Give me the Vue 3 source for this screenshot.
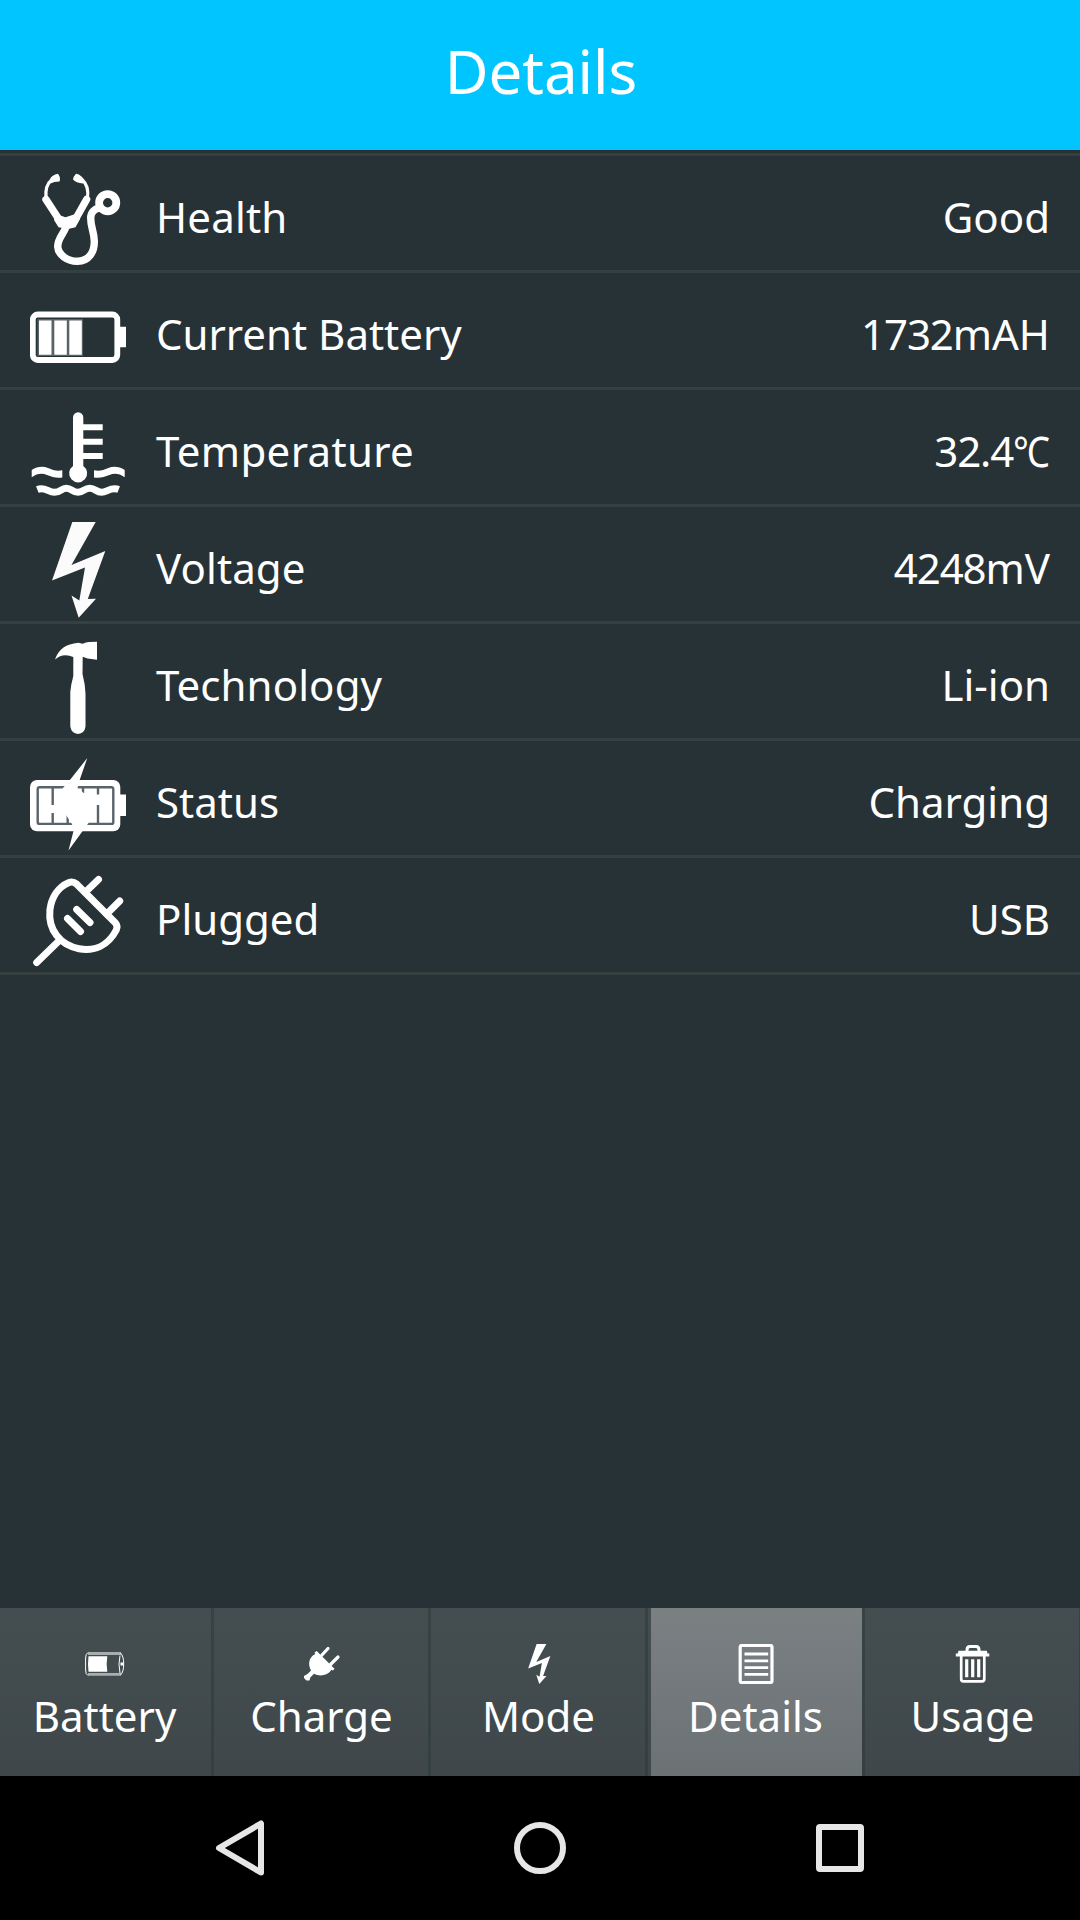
<script setup>
import { ref } from 'vue'

const details = ref([
  { icon: 'health', label: 'Health', value: 'Good', tracking: 0.2 },
  { icon: 'battery', label: 'Current Battery', number: '1732', unit: 'mAH' },
  { icon: 'temperature', label: 'Temperature', number: '32.4', degree: '℃', tracking: 0.35 },
  { icon: 'voltage', label: 'Voltage', number: '4248', unit: 'mV', tracking: 0.1 },
  { icon: 'technology', label: 'Technology', value: 'Li-ion', tracking: 0.1 },
  { icon: 'status', label: 'Status', value: 'Charging' },
  { icon: 'plugged', label: 'Plugged', value: 'USB' },
])

const tabs = ['Battery', 'Charge', 'Mode', 'Details', 'Usage']
const activeTab = ref('Details')
</script>

<template>
  <div class="screen">
    <header class="header">
      <h1>{{ activeTab }}</h1>
    </header>

    <!-- Battery details -->
    <main class="list">
      <div v-for="item in details" :key="item.label" class="row">
        <svg class="row-icon" viewBox="0 0 96 96">
          <g v-if="item.icon === 'health'" class="line">
            <path class="fill" d="M28 2.8 Q31 7 29.5 10.5 Q24 10.5 20.5 12.5 Q18.5 8 22.5 5 Q25 3 28 2.8Z" />
            <path class="fill" d="M46 2.8 Q43 6 43 8.5 Q46 12 53 12.5 Q55 8.5 51.5 5.5 Q49 3 46 2.8Z" />
            <path d="M21.5 9 C16.5 13 15.3 19 16 27 M52 8.5 C57 13 58.5 20 57.5 27" stroke-width="3.2" />
            <path d="M16 28.5 L30 50 M56.6 28.5 L44.5 50" stroke-width="7.4" />
            <path class="fill" d="M26 43 L35.5 46.3 L47 42.5 L50 48 L45.5 56.3 L38 58 L28.5 56.3 L24 49Z" />
            <path d="M36 56 C33 64 27.7 67.5 27.7 75.5 C28 84 38 90.5 47.5 90.3 C59 90 64.5 81 64.3 70 C64 60 60.7 57 60.7 47 C60.7 41.5 64 38 69 37" stroke-width="7.4" />
            <circle cx="77.7" cy="31.7" r="8.6" stroke-width="7.8" />
          </g>
          <g v-else-if="item.icon === 'battery'">
            <rect class="line" x="2.8" y="26.5" width="84.5" height="45.5" rx="5" stroke-width="5.8" />
            <rect class="dim" x="7.5" y="31" width="45.5" height="37" />
            <path d="M89 38.7h7v20.6h-7z M9 32.5h12.5v34.2h-12.5z M24.3 32.5h12.5v34.2h-12.5z M39.3 32.5h12.5v34.2h-12.5z" />
          </g>
          <g v-else-if="item.icon === 'temperature'">
            <path d="M43 12.5a5.15 5.15 0 0 1 10.3 0V19.3h19.4v6H53.3v8.4h19.4v6H53.3v8.3h19.4v6H53.3V61a9 9 0 1 1-10.3 0z" />
            <path d="M1.7 65C7 61.5 13 60.8 18 63S27 66.5 32.3 65.3V72.4C27 73.5 22 72 17 70S7 68.5 1.7 72.3Z" />
            <path d="M94.7 65C89.4 61.5 83.400 60.800 78.400 63S69.400 66.500 64 65.300V72.400C69.400 73.500 74.400 72 79.400 70S89.400 68.500 94.700 72.300Z" />
            <path class="line cut" d="M7.3 84.5 C15 81.5 18 87.3 24.5 87.3 S31 83.2 36.3 83.2 S42 87.3 48 87.3 S54 83.2 59.7 83.2 S66 87.3 71.5 87.3 S81 81.5 88.7 84.5" stroke-width="7" />
          </g>
          <path v-else-if="item.icon === 'voltage'" class="bolt" d="M42.3 0H65.7L41.5 43L75.3 29L57.8 77L66 76.8L48.7 95.7L41.5 73.5L49.3 78.5L55 45.5L22 58.5Z" />
          <path v-else-if="item.icon === 'technology'" d="M25 20.5 Q27.5 13 33.5 8.5 Q39 4.8 48.3 3.7 L52.7 4.8 Q56 2.9 59 2.9 L67 2.7 V20.8 L57.5 19.5 L52.7 17.7 L52.5 35 L54.7 45.5 L55.5 55 V87.5 Q54.5 94.5 48 95 Q41.5 94.5 40.3 87.5 V53 L41.3 45.5 L43.3 37 V17.9 Q36 15 29.5 17.5 Q27 18.8 25 20.5Z" />
          <g v-else-if="item.icon === 'status'">
            <rect y="24" width="90.3" height="51.3" rx="7" />
            <path d="M89 38.5h7v21.5h-7z" />
            <rect class="frame" x="7.7" y="31.3" width="75.6" height="36.6" rx="2" />
            <path class="frame" d="M22.7 32V49 M22.7 57V67.5 M37.7 57V67.5 M53 32V37.5 M68 32V38.5 M68 49V67.5" />
            <path d="M57.3 2 L39.5 24.5 L33 32 L26 45 L34 56 L42 68 L43.5 75 L38.5 94.5 L53 74.5 L58.5 67 L64 46 L55 38 L47.5 32 L50 23Z" />
          </g>
          <g v-else class="line" stroke-width="7">
            <path d="M6.7 89.5 L29.3 67.5 M56 18.5 L68.5 6.5 M76.7 41 L89.7 28 M46.7 36.5 L60 49.5 M37.5 45.5 L50.5 58.5" />
            <path d="M46.5 11 L85.5 50 Q88 53 86.3 57 C78 73 64 78.500 49 75.8 C30 72 18 57 19.9 37 C21.5 24 28.500 14 38.5 9.7 Q43 8 46.5 11Z" />
          </g>
        </svg>
        <span class="label" :style="{ letterSpacing: (item.tracking || 0) + 'px' }">{{ item.label }}</span>
        <span v-if="item.number" class="value"><span class="number">{{ item.number }}</span><span v-if="item.degree" class="degree">{{ item.degree }}</span>{{ item.unit }}</span>
        <span v-else class="value">{{ item.value }}</span>
      </div>
    </main>

    <!-- Tabs -->
    <nav class="tabs">
      <button
        v-for="tab in tabs"
        :key="tab"
        class="tab"
        :class="{ active: tab === activeTab }"
        @click="activeTab = tab"
      >
        <svg class="tab-icon" :viewBox="tab === 'Mode' ? '0 0 96 96' : '0 0 40 40'">
          <g v-if="tab === 'Battery'">
            <path class="shell" d="M3 9.5H36 M3 30.3H36" stroke-width="2.8" />
            <path class="line cut" d="M3 8.5 Q.6 10 .6 14V26Q.6 30.5 3 31.5 M35.5 9 Q38.7 12 38.7 20T35.5 31 M35 11.5 Q33 20 35 29" stroke-width="1" />
            <path d="M3.5 12.3H22.3Q21 20 22.3 27.7H3.5Q2.5 20 3.5 12.3Z M35.5 18.5h3v3h-3z" />
          </g>
          <g v-else-if="tab === 'Charge'">
            <path d="M14.7 7 L32.5 24.8 L31 26.5 L29.5 25.8 C26 31.5 18 33 12 29.8 L8.3 33.5 L7.5 36.5 L4.5 36.5 L2 34 V32 L5.5 30 L9 26.5 C5.5 20 7 13 13.3 10 L12.5 8.5Z" />
            <path class="line" d="M19.5 11.5 L26 4.5 M28.5 20.5 L36 13" stroke-width="3.2" />
          </g>
          <path v-else-if="tab === 'Mode'" d="M42.3 0H65.7L41.5 43L75.3 29L57.8 77L66 76.8L48.7 95.7L41.5 73.5L49.3 78.5L55 45.5L22 58.5Z" />
          <g v-else-if="tab === 'Details'" class="line cut">
            <rect x="4.2" y="1.5" width="31.8" height="37" rx="1.5" stroke-width="3.2" />
            <path d="M8.5 10H32.2M8.5 16.8H32.2M8.5 23.6H32.2M8.5 30.3H32.2" stroke-width="2.8" />
          </g>
          <g v-else class="line cut">
            <path d="M14 8V6Q14 2.5 17 2.5H23Q26 2.5 26 6V8" stroke-width="3" />
            <path class="fill" d="M5.5 6.8H33.8L34.5 9.5H36.3V12.5H2.8V9.5H4.8Z" />
            <path d="M8.2 12V35Q8.2 37.4 10.5 37.4H29Q31.3 37.4 31.3 35V12" stroke-width="2.7" />
            <path d="M13.7 15.3V33.3M19.7 15.3V33.3M25.7 15.3V33.3" stroke-width="3.2" />
          </g>
        </svg>
        <span>{{ tab }}</span>
      </button>
    </nav>

    <!-- System navigation -->
    <footer class="system">
      <svg viewBox="0 0 60 60"><path d="M9 30 L51 5.5 V54.5Z" /></svg>
      <svg viewBox="0 0 60 60"><circle cx="30" cy="30" r="23" /></svg>
      <svg viewBox="0 0 60 60"><rect x="9" y="9" width="42" height="42" rx="1" /></svg>
    </footer>
  </div>
</template>

<style>
body {
  margin: 0;
  background: #000;
}
</style>

<style scoped>
.screen {
  display: flex;
  flex-direction: column;
  width: 1080px;
  height: 1920px;
  overflow: hidden;
  background: #273236;
  color: #fff;
  font-family: "Noto Sans", "Noto Sans CJK JP", sans-serif;
  font-size: 42px;
}

.header {
  height: 150px;
  background: #00c5ff;
  text-align: center;
}

.header h1 {
  margin: 0 0 0 2px;
  font-size: 60px;
  font-weight: 400;
  line-height: 142px;
}

.list {
  flex: 1;
  margin-top: 3px;
  border-top: 3px solid #364041;
}

.row {
  display: flex;
  height: 114px;
  padding: 0 30px;
  border-bottom: 3px solid #364041;
  line-height: 121px;
}

.row-icon {
  width: 96px;
  height: 96px;
  margin: 15px 30px 0 0;
  fill: #fff;
}

.label {
  flex: 1;
}

.number {
  letter-spacing: -1.1px;
}

.degree {
  display: inline-block;
  margin-left: -5px;
  transform: scaleX(0.88);
  transform-origin: right;
}

.line {
  fill: none;
  stroke: #fff;
  stroke-linecap: round;
  stroke-linejoin: round;
}

.cut {
  stroke-linecap: butt;
}

.fill {
  fill: #fff;
  stroke: none;
}

.dim {
  fill: #596266;
}

.frame {
  fill: none;
  stroke: #59636a;
  stroke-width: 2.4;
}

.bolt {
  fill: #fbfbfb;
}

.shell {
  fill: none;
  stroke: #aaadae;
}

.tabs {
  display: flex;
  height: 168px;
  margin-left: -3px;
  background: linear-gradient(#444e50, #3f474a);
}

.tab {
  display: flex;
  flex: 0 0 217px;
  flex-direction: column;
  align-items: center;
  box-sizing: border-box;
  padding: 36px 2px 0 0;
  border: 0;
  background: linear-gradient(#374243, #343f42) right / 3px 100% no-repeat;
  color: #fff;
  font: inherit;
  line-height: 57px;
}

.tab.active {
  background:
    linear-gradient(#374243, #343f42) right / 3px 100% no-repeat,
    linear-gradient(#7b8083, #6b7274) 3px 0 / 211px 100% no-repeat;
}

.tab-icon {
  width: 40px;
  height: 40px;
  margin-bottom: 3px;
  fill: #fff;
}

.system {
  display: grid;
  grid-template-columns: repeat(3, 300px);
  place-content: center;
  place-items: center;
  height: 144px;
  background: #000;
}

.system svg {
  width: 60px;
  height: 60px;
  fill: none;
  stroke: #e6e6e6;
  stroke-width: 6;
  stroke-linejoin: round;
}
</style>
